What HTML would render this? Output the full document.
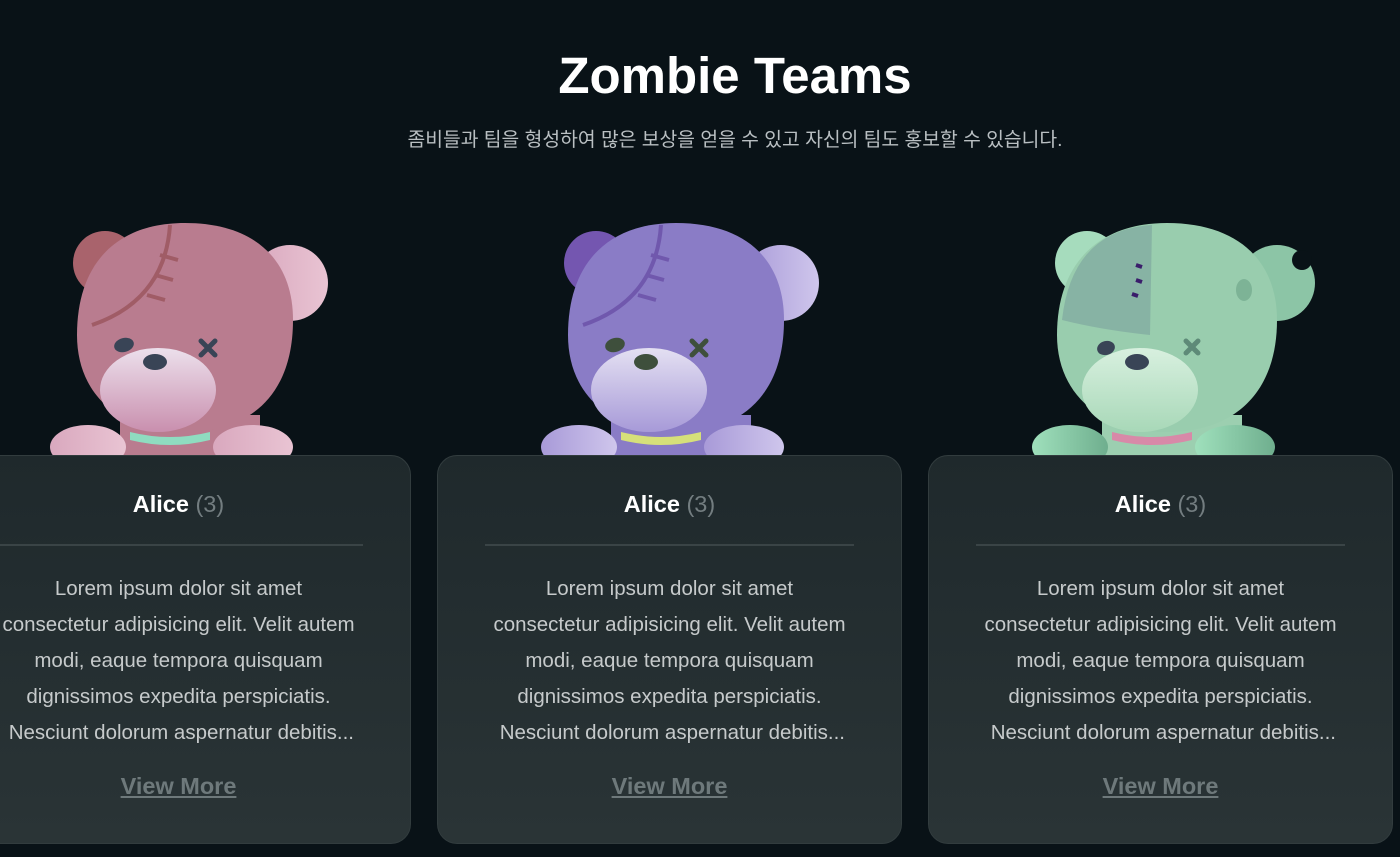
<!DOCTYPE html>
<html><head><meta charset="utf-8"><style>
body{margin:0;width:1400px;height:857px;overflow:hidden;background:#091217;font-family:"Liberation Sans","Noto Sans CJK KR",sans-serif;position:relative}
h1{position:absolute;left:0;width:1470px;top:46px;margin:0;text-align:center;color:#fff;font-size:51px;font-weight:700}
.sub{position:absolute;left:0;width:1470px;top:124px;text-align:center;color:#b9bfc2;font-size:19.3px}
.card{position:absolute;top:455px;width:465px;height:389px;border:1px solid #323c3e;border-radius:20px;background:linear-gradient(180deg,#1f292c,#2a3436);z-index:2;box-sizing:border-box}
.name{position:absolute;top:35px;width:100%;text-align:center;color:#fff;font-size:23.5px;font-weight:700}
.name span{color:#737d80;font-weight:400}
.hr{position:absolute;top:88px;left:47px;right:47px;height:2px;background:#3a4446}
.txt{position:absolute;top:115px;left:0;right:0;text-align:center;color:#c6cacb;font-size:20.5px;line-height:36px;white-space:nowrap}
.vm{position:absolute;top:317px;width:100%;text-align:center;color:#6e797b;font-size:23.5px;font-weight:700;text-decoration:underline}
.bear{position:absolute;top:220px;z-index:1}
</style></head><body>
<h1>Zombie Teams</h1>
<div class="sub">좀비들과 팀을 형성하여 많은 보상을 얻을 수 있고 자신의 팀도 홍보할 수 있습니다.</div>

<svg class="bear" style="left:50px" width="280" height="240" viewBox="0 0 280 240">
<defs><linearGradient id="m1" x1="0" y1="0" x2="0" y2="1"><stop offset="0" stop-color="#ece0ec"/><stop offset="1" stop-color="#c98fae"/></linearGradient>
<linearGradient id="p1" x1="0" x2="1"><stop offset="0" stop-color="#d9a8be"/><stop offset="1" stop-color="#e9c4d3"/></linearGradient></defs>
<circle cx="55" cy="43" r="32" fill="#a9636c"/><circle cx="240" cy="63" r="38" fill="url(#p1)"/>
<rect x="70" y="195" width="140" height="45" fill="#b97c8f"/>
<path d="M135 3 C205 3 243 40 243 100 C243 175 200 212 135 212 C70 212 27 175 27 115 C27 45 65 3 135 3Z" fill="#b97c8f"/>
<path d="M120 5 Q115 80 42 105" stroke="#a05c66" stroke-width="4" fill="none"/>
<path d="M110 35l18 5M105 55l18 5M97 75l18 5" stroke="#a05c66" stroke-width="4"/>
<ellipse cx="108" cy="170" rx="58" ry="42" fill="url(#m1)"/>
<ellipse cx="105" cy="142" rx="12" ry="8" fill="#394456"/>
<ellipse cx="74" cy="125" rx="10" ry="7" fill="#394456" transform="rotate(-15 74 125)"/>
<path d="M151 121l14 14M165 121l-14 14" stroke="#394456" stroke-width="5" stroke-linecap="round"/>
<path d="M80 212 Q120 222 160 212 L160 220 Q120 230 80 220Z" fill="#8fdcc0"/>
<ellipse cx="38" cy="227" rx="38" ry="22" fill="url(#p1)"/><ellipse cx="203" cy="227" rx="40" ry="22" fill="url(#p1)"/>
</svg>

<svg class="bear" style="left:541px" width="280" height="240" viewBox="0 0 280 240">
<defs><linearGradient id="m2" x1="0" y1="0" x2="0" y2="1"><stop offset="0" stop-color="#e4e0f2"/><stop offset="1" stop-color="#a79ad8"/></linearGradient>
<linearGradient id="p2" x1="0" x2="1"><stop offset="0" stop-color="#a89ad8"/><stop offset="1" stop-color="#cfc6ec"/></linearGradient></defs>
<circle cx="55" cy="43" r="32" fill="#7456b0"/><circle cx="240" cy="63" r="38" fill="url(#p2)"/>
<rect x="70" y="195" width="140" height="45" fill="#8a7cc6"/>
<path d="M135 3 C205 3 243 40 243 100 C243 175 200 212 135 212 C70 212 27 175 27 115 C27 45 65 3 135 3Z" fill="#8a7cc6"/>
<path d="M120 5 Q115 80 42 105" stroke="#7058ad" stroke-width="4" fill="none"/>
<path d="M110 35l18 5M105 55l18 5M97 75l18 5" stroke="#7058ad" stroke-width="4"/>
<ellipse cx="108" cy="170" rx="58" ry="42" fill="url(#m2)"/>
<ellipse cx="105" cy="142" rx="12" ry="8" fill="#3e4f3c"/>
<ellipse cx="74" cy="125" rx="10" ry="7" fill="#3e4f3c" transform="rotate(-15 74 125)"/>
<path d="M151 121l14 14M165 121l-14 14" stroke="#3e4f3c" stroke-width="5" stroke-linecap="round"/>
<path d="M80 212 Q120 222 160 212 L160 220 Q120 230 80 220Z" fill="#d6e07a"/>
<ellipse cx="38" cy="227" rx="38" ry="22" fill="url(#p2)"/><ellipse cx="203" cy="227" rx="40" ry="22" fill="url(#p2)"/>
</svg>

<svg class="bear" style="left:1032px" width="290" height="240" viewBox="0 0 290 240">
<defs><linearGradient id="m3" x1="0" y1="0" x2="0" y2="1"><stop offset="0" stop-color="#d8f0df"/><stop offset="1" stop-color="#a8d8b8"/></linearGradient>
<linearGradient id="p3" x1="0" x2="1"><stop offset="0" stop-color="#9fe0bc"/><stop offset="1" stop-color="#6fae8e"/></linearGradient></defs>
<circle cx="55" cy="43" r="32" fill="#a6dcbd"/><circle cx="245" cy="63" r="38" fill="#8cc5a6"/>
<circle cx="270" cy="40" r="10" fill="#091217"/>
<rect x="70" y="195" width="140" height="45" fill="#9ccfb0"/>
<path d="M135 3 C205 3 245 40 245 100 C245 175 200 212 135 212 C70 212 25 175 25 115 C25 45 65 3 135 3Z" fill="#99cdae"/>
<path d="M120 5 Q40 10 30 100 Q70 110 118 115 Z" fill="#7fa8a0" opacity="0.7"/>
<path d="M104 45l6 2M104 60l6 2M100 74l6 2" stroke="#3a1d6b" stroke-width="4"/>
<ellipse cx="212" cy="70" rx="8" ry="11" fill="#7db396"/>
<ellipse cx="108" cy="170" rx="58" ry="42" fill="url(#m3)"/>
<ellipse cx="105" cy="142" rx="12" ry="8" fill="#394456"/>
<ellipse cx="74" cy="128" rx="9" ry="7" fill="#394456" transform="rotate(-15 74 128)"/>
<path d="M154 121l12 12M166 121l-12 12" stroke="#5e8a78" stroke-width="5" stroke-linecap="round"/>
<path d="M80 212 Q120 222 160 212 L160 220 Q120 230 80 220Z" fill="#d889a8"/>
<ellipse cx="38" cy="227" rx="38" ry="22" fill="url(#p3)"/><ellipse cx="203" cy="227" rx="40" ry="22" fill="url(#p3)"/>
</svg>

<div class="card" style="left:-54px"><div class="name">Alice <span>(3)</span></div><div class="hr"></div><div class="txt">Lorem ipsum dolor sit amet<br>consectetur adipisicing elit. Velit autem<br>modi, eaque tempora quisquam<br>dignissimos expedita perspiciatis.<br>&nbsp;Nesciunt dolorum aspernatur debitis...</div><div class="vm">View More</div></div>
<div class="card" style="left:437px"><div class="name">Alice <span>(3)</span></div><div class="hr"></div><div class="txt">Lorem ipsum dolor sit amet<br>consectetur adipisicing elit. Velit autem<br>modi, eaque tempora quisquam<br>dignissimos expedita perspiciatis.<br>&nbsp;Nesciunt dolorum aspernatur debitis...</div><div class="vm">View More</div></div>
<div class="card" style="left:928px"><div class="name">Alice <span>(3)</span></div><div class="hr"></div><div class="txt">Lorem ipsum dolor sit amet<br>consectetur adipisicing elit. Velit autem<br>modi, eaque tempora quisquam<br>dignissimos expedita perspiciatis.<br>&nbsp;Nesciunt dolorum aspernatur debitis...</div><div class="vm">View More</div></div>
</body></html>
